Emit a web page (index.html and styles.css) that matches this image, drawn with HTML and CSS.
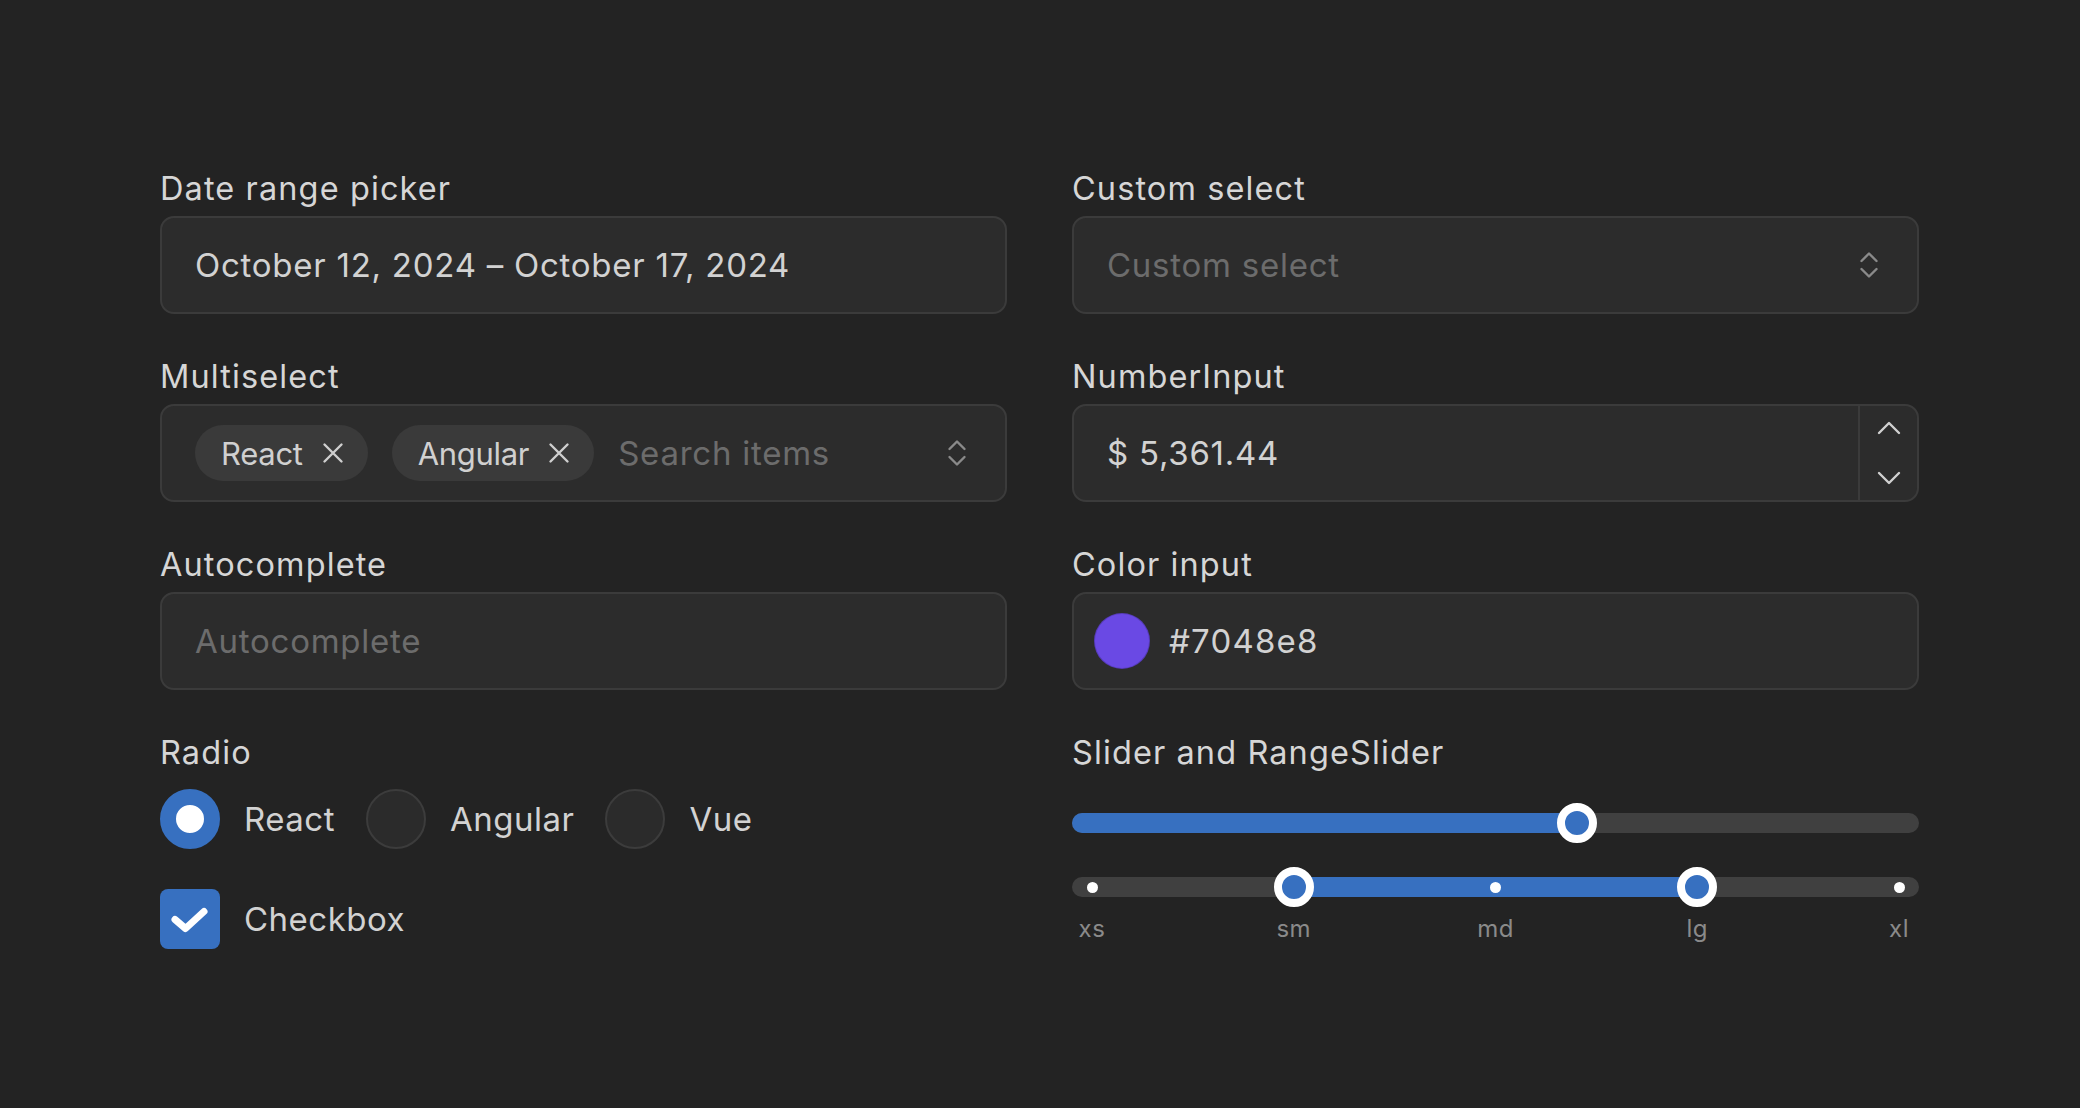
FILE: index.html
```html
<!DOCTYPE html>
<html lang="en">
<head>
<meta charset="utf-8">
<title>Form controls</title>
<link rel="stylesheet" href="styles.css">
</head>
<body>
<main class="page">
  <div class="field">
    <div class="label">Date range picker</div>
    <div class="box"><span class="value">October 12, 2024 – October 17, 2024</span></div>
  </div>
  <div class="field">
    <div class="label">Custom select</div>
    <div class="box box-select">
      <span class="placeholder">Custom select</span>
      <svg class="updown" width="20" height="28" viewBox="0 0 20 28"><path d="M2.5 10 L10 2.5 L17.5 10 M2.5 18 L10 25.5 L17.5 18"/></svg>
    </div>
  </div>

  <div class="field">
    <div class="label">Multiselect</div>
    <div class="box box-multi">
      <span class="chip">React<svg class="x" width="22" height="22" viewBox="0 0 22 22"><path d="M2.5 2.5 L19.5 19.5 M19.5 2.5 L2.5 19.5"/></svg></span>
      <span class="chip">Angular<svg class="x" width="22" height="22" viewBox="0 0 22 22"><path d="M2.5 2.5 L19.5 19.5 M19.5 2.5 L2.5 19.5"/></svg></span>
      <span class="placeholder">Search items</span>
      <svg class="updown" width="20" height="28" viewBox="0 0 20 28"><path d="M2.5 10 L10 2.5 L17.5 10 M2.5 18 L10 25.5 L17.5 18"/></svg>
    </div>
  </div>
  <div class="field">
    <div class="label">NumberInput</div>
    <div class="box box-number">
      <span class="value number-value">$ 5,361.44</span>
      <div class="stepper">
        <svg class="step" width="24" height="14" viewBox="0 0 24 14"><path d="M2 12 L12 2 L22 12"/></svg>
        <svg class="step" width="24" height="14" viewBox="0 0 24 14"><path d="M2 2 L12 12 L22 2"/></svg>
      </div>
    </div>
  </div>

  <div class="field">
    <div class="label">Autocomplete</div>
    <div class="box"><span class="placeholder">Autocomplete</span></div>
  </div>
  <div class="field">
    <div class="label">Color input</div>
    <div class="box box-color">
      <span class="swatch"></span>
      <span class="value hex">#7048e8</span>
    </div>
  </div>

  <div class="field">
    <div class="label">Radio</div>
    <div class="radios">
      <label class="option"><span class="radio radio-on"></span><span>React</span></label>
      <label class="option"><span class="radio"></span><span>Angular</span></label>
      <label class="option"><span class="radio"></span><span>Vue</span></label>
    </div>
    <label class="option check-row">
      <span class="checkbox"><svg width="60" height="60" viewBox="0 0 60 60"><path d="M15 30.5 L25.5 39.5 L44 22.5"/></svg></span>
      <span>Checkbox</span>
    </label>
  </div>
  <div class="field">
    <div class="label">Slider and RangeSlider</div>
    <div class="slider slider-single">
      <div class="track">
        <div class="fill" style="left:0;width:59.6%"></div>
        <span class="thumb" style="left:59.6%"></span>
      </div>
    </div>
    <div class="slider slider-range">
      <div class="track">
        <div class="rail">
          <div class="fill" style="left:25%;width:50%"></div>
          <span class="tick" style="left:0%"></span>
          <span class="tick" style="left:50%"></span>
          <span class="tick" style="left:100%"></span>
          <span class="thumb" style="left:25%"></span>
          <span class="thumb" style="left:75%"></span>
        </div>
      </div>
    </div>
    <div class="marks">
      <span class="mark"><span>xs</span></span>
      <span class="mark"><span>sm</span></span>
      <span class="mark"><span>md</span></span>
      <span class="mark"><span>lg</span></span>
      <span class="mark"><span>xl</span></span>
    </div>
  </div>
</main>
</body>
</html>
```

FILE: styles.css
```css
html, body {
  margin: 0;
  background: #232323;
}
body {
  font-family: Inter, "Noto Sans", "Liberation Sans", sans-serif;
  color: #d4d4d4;
}
.page {
  box-sizing: border-box;
  padding: 170px 0 0 160px;
  display: grid;
  grid-template-columns: 847px 847px;
  column-gap: 65px;
  row-gap: 44px;
}
.field {
  display: flex;
  flex-direction: column;
  gap: 8px;
}
.label {
  font-size: 32.5px;
  line-height: 38px;
  color: #d6d6d6;
  letter-spacing: 1.1px;
}
.box {
  box-sizing: border-box;
  height: 98px;
  border: 2px solid #3b3b3b;
  border-radius: 14px;
  background: #2c2c2c;
  display: flex;
  align-items: center;
  padding: 0 33px;
  font-size: 33px;
  letter-spacing: 0.75px;
}
.value {
  color: #d2d2d2;
}
.hex {
  letter-spacing: 1.2px;
}
.placeholder {
  color: #6c6c6c;
}
.updown {
  margin-left: auto;
  fill: none;
  stroke: #8a8a8a;
  stroke-width: 2.4;
  stroke-linecap: round;
  stroke-linejoin: round;
}
.box-select {
  padding-right: 38px;
}
.box-multi {
  gap: 24px;
  padding-right: 38px;
}
.chip {
  display: inline-flex;
  align-items: center;
  gap: 19px;
  height: 56px;
  padding: 0 24px 0 26px;
  border-radius: 28px;
  background: #3a3a3a;
  font-size: 31px;
  letter-spacing: -0.3px;
  color: #d0d0d0;
}
.x {
  fill: none;
  stroke: #cfcfcf;
  stroke-width: 2.4;
  stroke-linecap: round;
}
.box-number {
  padding-right: 0;
  align-items: stretch;
}
.number-value {
  flex: 1;
  display: flex;
  align-items: center;
}
.stepper {
  box-sizing: border-box;
  width: 59px;
  padding: 15px 0;
  border-left: 2px solid #3b3b3b;
  display: flex;
  flex-direction: column;
  justify-content: space-between;
  align-items: center;
}
.step {
  display: block;
  fill: none;
  stroke: #d0d0d0;
  stroke-width: 2.4;
  stroke-linecap: round;
  stroke-linejoin: round;
}
.box-color {
  padding-left: 20px;
  gap: 19px;
}
.swatch {
  box-sizing: border-box;
  width: 56px;
  height: 56px;
  border-radius: 50%;
  background: #6a49e4;
  border: 1px solid rgba(0, 0, 0, 0.18);
}
.radios {
  display: flex;
  align-items: center;
  gap: 31px;
  margin-top: 9px;
}
.option {
  display: flex;
  align-items: center;
  gap: 24px;
  font-size: 33px;
  color: #d2d2d2;
  letter-spacing: 0.5px;
}
.radio {
  box-sizing: border-box;
  width: 60px;
  height: 60px;
  border-radius: 50%;
  background: #2b2b2b;
  border: 2px solid #3c3c3c;
}
.radio-on {
  background: #ffffff;
  border: 16px solid #3770c0;
}
.check-row {
  margin-top: 32px;
}
.checkbox {
  width: 60px;
  height: 60px;
  border-radius: 8px;
  background: #3770c0;
}
.checkbox svg {
  display: block;
  fill: none;
  stroke: #ffffff;
  stroke-width: 7;
  stroke-linecap: round;
  stroke-linejoin: round;
}
.slider {
  height: 40px;
  display: flex;
  align-items: center;
}
.slider-single {
  margin-top: 23px;
}
.slider-range {
  margin-top: 16px;
}
.track {
  position: relative;
  flex: 1;
  height: 20px;
  border-radius: 10px;
  background: #404040;
}
.rail {
  position: absolute;
  top: 0;
  bottom: 0;
  left: 20px;
  right: 20px;
}
.fill {
  position: absolute;
  top: 0;
  bottom: 0;
  background: #3770c0;
  border-radius: 10px;
}
.slider-range .fill {
  border-radius: 0;
}
.thumb {
  position: absolute;
  top: 50%;
  box-sizing: border-box;
  width: 40px;
  height: 40px;
  margin: -20px 0 0 -20px;
  border-radius: 50%;
  border: 8px solid #ffffff;
  background: #3770c0;
}
.tick {
  position: absolute;
  top: 50%;
  width: 11px;
  height: 11px;
  margin: -5.5px 0 0 -5.5px;
  border-radius: 50%;
  background: #ffffff;
}
.marks {
  display: flex;
  justify-content: space-between;
  margin: 0 20px;
  font-size: 24px;
  line-height: 28px;
  letter-spacing: 0.5px;
  color: #8a8a8a;
}
.mark {
  width: 0;
  display: flex;
  justify-content: center;
}
```
